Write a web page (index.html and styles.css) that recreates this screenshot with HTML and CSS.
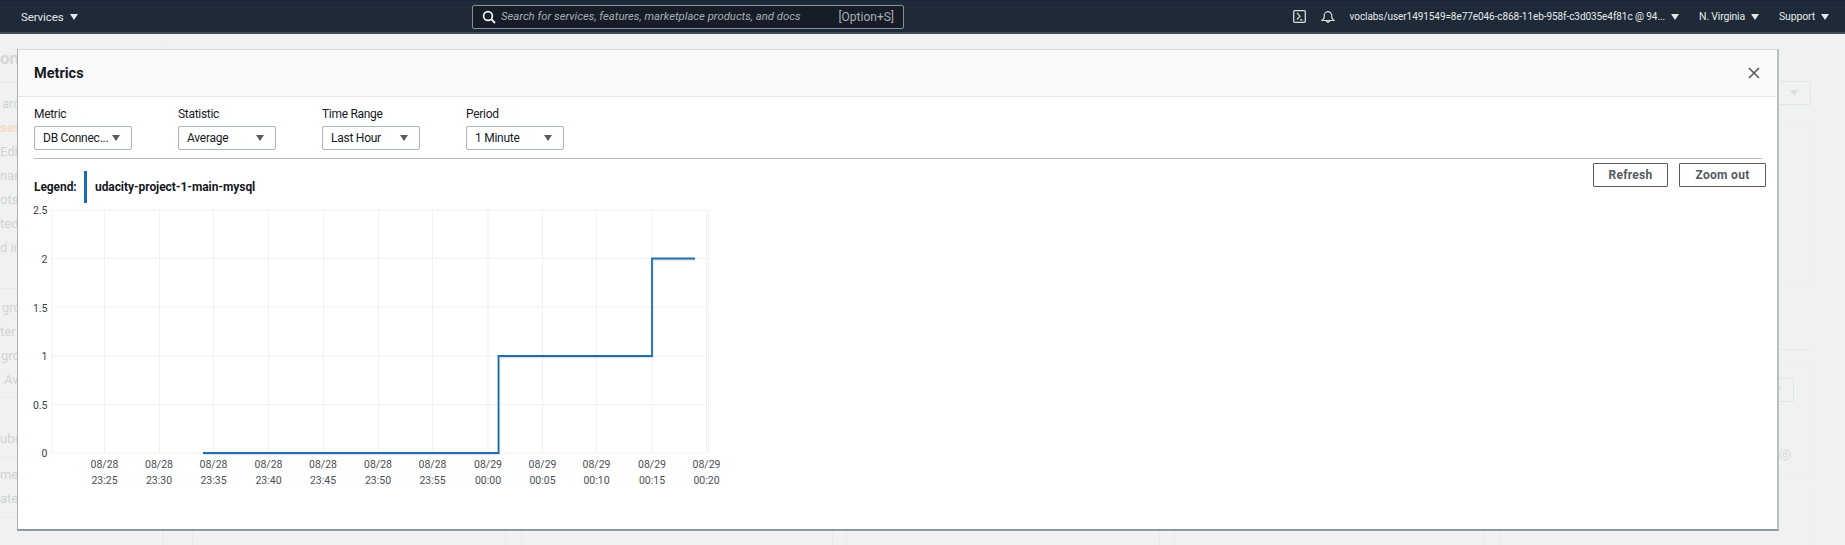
FILE: index.html
```html
<!DOCTYPE html>
<html lang="en">
<head>
    <meta charset="UTF-8">
    <title>Metrics</title>
    <link rel="stylesheet" href="styles.css">
</head>
<body>
<header class="topbar">
    <div class="nav-item services">Services <span class="caret"></span></div>
    <div class="search">
        <svg class="search-icon" width="14" height="14" viewBox="0 0 14 14">
            <circle cx="6" cy="6" r="4.4" fill="none" stroke="#f2f3f3" stroke-width="1.7"/>
            <path d="M9.2 9.2 L13 13" stroke="#f2f3f3" stroke-width="1.8"/>
        </svg>
        <span class="search-text">Search for services, features, marketplace products, and docs</span>
        <span class="search-key">[Option+S]</span>
    </div>
    <div class="nav-right">
        <svg class="shell-icon" width="13" height="13" viewBox="0 0 13 13">
            <rect x="0.7" y="0.7" width="11.6" height="11.6" rx="1" fill="none" stroke="#d5dbdb" stroke-width="1.3"/>
            <path d="M4 3 L7 6.2 L4 9.5 M7 9.8 H9.5" fill="none" stroke="#d5dbdb" stroke-width="1.2"/>
        </svg>
        <svg class="bell-icon" width="14" height="14" viewBox="0 0 14 14">
            <path d="M1 10.5 H13 L10.8 8 V5.5 A3.8 3.8 0 0 0 3.2 5.5 V8 Z" fill="none" stroke="#d5dbdb" stroke-width="1.2"/>
            <path d="M5.3 11 A1.8 1.8 0 0 0 8.7 11" fill="none" stroke="#d5dbdb" stroke-width="1.2"/>
        </svg>
        <div class="nav-item account">voclabs/user1491549=8e77e046-c868-11eb-958f-c3d035e4f81c @ 94... <span class="caret"></span></div>
        <div class="nav-item region">N. Virginia <span class="caret"></span></div>
        <div class="nav-item support">Support <span class="caret"></span></div>
    </div>
</header>

<div class="page">
    <aside class="sidebar">
        <div class="side-title">on</div>
        <div class="side-group">
            <div class="in-2">ard</div>
            <div class="active">ses</div>
            <div>Edit</div>
            <div>nan</div>
            <div>ots</div>
            <div>ted</div>
            <div>d in</div>
        </div>
        <div class="side-group second">
            <div class="in-2">gro</div>
            <div>ter</div>
            <div class="in-1">gro</div>
            <div class="in-4">Av</div>
        </div>
        <div class="side-group third">
            <div>ubs</div>
        </div>
        <div class="side-group fourth">
            <div>men</div>
            <div>ate</div>
        </div>
    </aside>
    <main class="content">
        <div class="right-column">
            <div class="ghost-select"><span class="ghost-caret"></span></div>
            <div class="ghost-panel"></div>
            <div class="ghost-line"></div>
            <div class="ghost-panel small">
                <div class="ghost-select inner"><span class="ghost-caret"></span></div>
                <svg class="gear" width="14" height="14" viewBox="0 0 14 14">
                    <circle cx="7" cy="7" r="2" fill="none" stroke="#dcdfdf" stroke-width="1.4"/>
                    <circle cx="7" cy="7" r="5.2" fill="none" stroke="#dcdfdf" stroke-width="1.8" stroke-dasharray="2.4 0.9"/>
                </svg>
            </div>
            <div class="ghost-tail"></div>
        </div>
        <div class="ghost-columns">
            <span class="col one"></span>
            <span class="col two"></span>
            <span class="col three"></span>
            <span class="col four"></span>
            <span class="col five"></span>
        </div>
    </main>
</div>

<section class="modal">
    <div class="modal-header">
        <h2>Metrics</h2>
        <svg class="close" width="12" height="12" viewBox="0 0 12 12">
            <path d="M1 1 L11 11 M11 1 L1 11" stroke="#545b64" stroke-width="1.6"/>
        </svg>
    </div>
    <div class="modal-body">
        <div class="controls">
            <div class="field">
                <label>Metric</label>
                <div class="select"><span>DB Connec...</span><span class="select-caret"></span></div>
            </div>
            <div class="field">
                <label>Statistic</label>
                <div class="select"><span>Average</span><span class="select-caret"></span></div>
            </div>
            <div class="field">
                <label>Time Range</label>
                <div class="select"><span>Last Hour</span><span class="select-caret"></span></div>
            </div>
            <div class="field">
                <label>Period</label>
                <div class="select"><span>1 Minute</span><span class="select-caret"></span></div>
            </div>
        </div>
        <div class="legend-row">
            <div class="legend">
                <span class="legend-label">Legend:</span>
                <span class="legend-name">udacity-project-1-main-mysql</span>
            </div>
            <div class="actions">
                <button class="btn refresh">Refresh</button>
                <button class="btn zoom">Zoom out</button>
            </div>
        </div>
        <svg class="chart" width="720" height="290" viewBox="18 205 720 290">
            <g class="grid">
                <path d="M52 211 H708 M52 259.5 H708 M52 308 H708 M52 357 H708 M52 405.5 H708 M52 454 H708"/>
                <path d="M52 211 V454 M104.500 211 V454 M159.500 211 V454 M213.500 211 V454 M268.500 211 V454 M323.500 211 V454 M378.500 211 V454 M432.500 211 V454 M488 211 V454 M542.500 211 V454 M596.500 211 V454 M652 211 V454 M706.500 211 V454 M708.500 211 V454"/>
            </g>
            <path class="line-shadow" d="M203 455.500 H499.500 V358.500 H653 V261 H695"/>
            <path class="line" d="M203 454 H498.500 V357 H652 V259.500 H695"/>
            <g class="y-labels">
                <text x="47.500" y="215">2.5</text>
                <text x="47.500" y="264">2</text>
                <text x="47.500" y="313">1.5</text>
                <text x="47.500" y="361">1</text>
                <text x="47.500" y="410">0.5</text>
                <text x="47.500" y="458">0</text>
            </g>
            <g class="x-labels">
                <text x="104.500" y="469">08/28</text><text x="104.500" y="485">23:25</text>
                <text x="159" y="469">08/28</text><text x="159" y="485">23:30</text>
                <text x="213.500" y="469">08/28</text><text x="213.500" y="485">23:35</text>
                <text x="268.500" y="469">08/28</text><text x="268.500" y="485">23:40</text>
                <text x="323" y="469">08/28</text><text x="323" y="485">23:45</text>
                <text x="378" y="469">08/28</text><text x="378" y="485">23:50</text>
                <text x="432.500" y="469">08/28</text><text x="432.500" y="485">23:55</text>
                <text x="488" y="469">08/29</text><text x="488" y="485">00:00</text>
                <text x="542.500" y="469">08/29</text><text x="542.500" y="485">00:05</text>
                <text x="596.500" y="469">08/29</text><text x="596.500" y="485">00:10</text>
                <text x="652" y="469">08/29</text><text x="652" y="485">00:15</text>
                <text x="706.500" y="469">08/29</text><text x="706.500" y="485">00:20</text>
            </g>
        </svg>
    </div>
</section>
</body>
</html>
```

FILE: styles.css
```css
* {
    box-sizing: border-box;
}

html, body {
    height: 100%;
}

body {
    margin: 0;
    overflow: hidden;
    position: relative;
    font-family: Roboto, "Liberation Sans", sans-serif;
    background-color: #f0f2f1;
}

.topbar {
    display: flex;
    align-items: center;
    height: 34px;
    padding: 0 16px 0 21px;
    background-color: #1f2a38;
    border-top: 1px solid #17233a;
    border-bottom: 2px solid #434c55;
    color: #e6e8e8;
    font-size: 11.500px;
}

.nav-item {
    display: flex;
    align-items: center;
    white-space: nowrap;
}

.caret {
    display: inline-block;
    margin-left: 6px;
    border-left: 4px solid transparent;
    border-right: 4px solid transparent;
    border-top: 6px solid #e6e8e8;
}

.services {
    width: 451px;
    letter-spacing: -0.1px;
}

.search {
    display: flex;
    align-items: center;
    width: 432px;
    height: 24px;
    padding: 0 9px;
    background-color: #171d28;
    border: 1px solid #8a9196;
    border-radius: 2px;
    font-size: 12px;
    color: #a9adb1;
}

.search-icon {
    flex: none;
    margin-right: 5px;
}

.search-text {
    flex: 1;
    font-size: 11.300px;
    font-style: italic;
}

.nav-right {
    display: flex;
    align-items: center;
    margin-left: auto;
}

.shell-icon {
    margin-right: 15px;
}

.bell-icon {
    margin-right: 15px;
}

.account {
    margin-right: 20px;
    font-size: 10px;
    letter-spacing: -0.07px;
}

.region {
    margin-right: 20px;
    font-size: 10.500px;
    letter-spacing: -0.2px;
}

.support {
    font-size: 10.500px;
    letter-spacing: -0.15px;
}

.page {
    display: flex;
    height: 511px;
}

.sidebar {
    flex: none;
    width: 163px;
    border-right: 1px solid #eceeee;
    font-size: 13px;
    color: #cfd3d3;
}

.side-title {
    height: 49px;
    padding-top: 14px;
    font-size: 17px;
    font-weight: 700;
    color: #d4d7d7;
    border-bottom: 1px solid #e6e8e8;
}

.side-group {
    padding: 9px 0 0;
    line-height: 24px;
}

.side-group .active {
    color: #f3d9c8;
    font-weight: 700;
}

.in-1 {
    padding-left: 1px;
}

.in-2 {
    padding-left: 2px;
}

.in-4 {
    padding-left: 4px;
}

.second {
    margin-top: 28px;
    padding-top: 7px;
    border-top: 1px solid #e8eaea;
}

.third {
    margin-top: 5px;
    padding-top: 29px;
    border-top: 1px solid #e8eaea;
}

.fourth {
    margin-top: 6px;
    padding-top: 5px;
    padding-bottom: 6px;
    border-top: 1px solid #e8eaea;
    border-bottom: 1px solid #e8eaea;
}

.content {
    flex: 1;
    display: flex;
    flex-direction: column;
}

.right-column {
    flex: none;
    align-self: flex-end;
    width: 100px;
    height: 496px;
    margin-right: 34px;
    padding-top: 47px;
}

.ghost-select {
    position: relative;
    height: 24px;
    border: 1px solid #e2e5e5;
    border-radius: 2px;
}

.ghost-caret {
    position: absolute;
    right: 12px;
    top: 8px;
    border-left: 4px solid transparent;
    border-right: 4px solid transparent;
    border-top: 6px solid #dcdfdf;
}

.ghost-panel {
    height: 165px;
    margin-top: 16px;
    border: 1px solid #edefef;
}

.ghost-line {
    height: 1px;
    margin-top: 63px;
    background-color: #e6e8e8;
}

.ghost-panel.small {
    position: relative;
    height: 113px;
    margin-top: 16px;
    padding: 11px 16px 0 0;
}

.ghost-select.inner {
    height: 24px;
}

.gear {
    position: absolute;
    right: 18px;
    bottom: 16px;
}

.ghost-tail {
    height: 70px;
    margin-top: 8px;
    border-right: 1px solid #edefef;
}

.ghost-columns {
    flex: 1;
    display: flex;
}

.col {
    display: block;
    border-left: 1px solid #e8eaea;
    border-right: 1px solid #e8eaea;
}

.col.one {
    width: 30px;
}

.col.two {
    width: 17px;
    margin-left: 312px;
}

.col.three {
    width: 15px;
    margin-left: 310px;
}

.col.four {
    width: 16px;
    margin-left: 312px;
}

.col.five {
    width: 17px;
    margin-left: 308px;
}

.modal {
    position: absolute;
    left: 17px;
    top: 49px;
    width: 1762px;
    height: 482px;
    background-color: #fff;
    border: 1px solid #d5dbdb;
    border-bottom: 2px solid #8f9a9e;
    border-right: 2px solid #b9c0c2;
    border-left-color: #aab2b4;
}

.modal-header {
    display: flex;
    align-items: center;
    justify-content: space-between;
    height: 47px;
    padding: 0 17px 0 16px;
    background-color: #fafafa;
    border-bottom: 1px solid #e4e6e6;
}

.modal-header h2 {
    margin: 0;
    font-size: 14.500px;
    font-weight: 700;
    color: #16191f;
}

.modal-body {
    padding: 0 15px 0 16px;
}

.controls {
    display: flex;
    gap: 46px;
    height: 62px;
    padding-top: 9px;
    border-bottom: 1px solid #b4b9ba;
}

.field {
    width: 98px;
}

.field label {
    display: block;
    height: 20px;
    line-height: 16px;
    font-size: 12px;
    letter-spacing: -0.3px;
    color: #16191f;
}

.select {
    display: flex;
    align-items: center;
    justify-content: space-between;
    height: 24px;
    padding: 0 11px 0 8px;
    border: 1px solid #aab7b8;
    border-radius: 2px;
    font-size: 12px;
    letter-spacing: -0.25px;
    color: #16191f;
    white-space: nowrap;
}

.select-caret {
    border-left: 4px solid transparent;
    border-right: 4px solid transparent;
    border-top: 6px solid #545b64;
}

.legend-row {
    display: flex;
    align-items: flex-start;
    justify-content: space-between;
    height: 45px;
}

.legend {
    display: flex;
    align-items: center;
    margin-top: 12px;
    height: 32px;
    font-size: 12px;
    font-weight: 700;
    letter-spacing: -0.07px;
    color: #16191f;
}

.legend-label {
    width: 50px;
}

.legend-name {
    height: 32px;
    line-height: 32px;
    padding-left: 8px;
    border-left: 3px solid #1a6cb0;
}

.actions {
    display: flex;
    gap: 11px;
    margin-top: 4px;
    margin-right: -4px;
}

.btn {
    height: 24px;
    padding: 0;
    background-color: #fff;
    border: 1px solid #545b64;
    border-radius: 1px;
    font-family: inherit;
    font-size: 12px;
    font-weight: 700;
    letter-spacing: 0.3px;
    color: #545b64;
}

.refresh {
    width: 75px;
}

.zoom {
    width: 87px;
}

.chart {
    display: block;
    margin-left: -16px;
}

.grid path {
    fill: none;
    stroke: #f0f1f1;
    stroke-width: 1;
}

.line {
    fill: none;
    stroke: #1f6fb0;
    stroke-width: 1.800;
}

.line-shadow {
    fill: none;
    stroke: #dfe1e2;
    stroke-width: 1.500;
}

.y-labels text {
    font-size: 10.500px;
    fill: #3a3f45;
    text-anchor: end;
}

.x-labels text {
    font-size: 10.500px;
    fill: #4b5055;
    text-anchor: middle;
}
```
